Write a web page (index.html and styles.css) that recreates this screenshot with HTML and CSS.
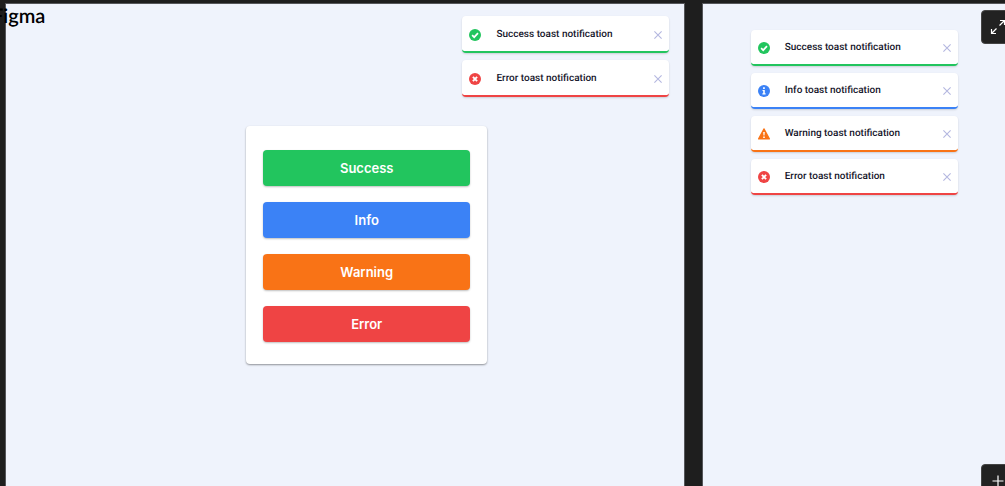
FILE: index.html
```html
<!DOCTYPE html>
<html lang="en">
<head>
<meta charset="utf-8">
<title>Toast notifications</title>
<link rel="stylesheet" href="styles.css">
</head>
<body>
<svg width="0" height="0" class="symbols" aria-hidden="true">
  <symbol id="check" viewBox="0 0 12 12"><circle cx="6" cy="6" r="6"/><path d="M3.100 6.200 5.200 8.200 9 4.200" fill="none" stroke="#fff" stroke-width="1.7"/></symbol>
  <symbol id="info" viewBox="0 0 12 12"><circle cx="6" cy="6" r="6"/><path d="M5.100 2.300h1.700v1.600H5.100zM4.500 4.900h2.300v3.300h.8v1.200H4.400V8.200h.8V6.100h-.7z" fill="#fff"/></symbol>
  <symbol id="warning" viewBox="0 0 12 12"><path d="M6 .9 11.400 10.900H.6z" stroke="currentColor" stroke-width="1.2" stroke-linejoin="round"/><path d="M5.200 4h1.600l-.3 3.600h-1zM5.200 8.400h1.600V10H5.200z" fill="#fff"/></symbol>
  <symbol id="error" viewBox="0 0 12 12"><circle cx="6" cy="6" r="6"/><path d="m3.900 3.900 4.200 4.200m0-4.200L3.900 8.100" fill="none" stroke="#fff" stroke-width="1.9"/></symbol>
  <symbol id="close" viewBox="0 0 8 8"><path d="m.4.4 7.200 7.200m0-7.200L.4 7.600" fill="none" stroke="currentColor" stroke-width="1.1"/></symbol>
</svg>
<div class="board">
  <main class="panel demo">
    <section class="toasts">
      <div class="toast success"><svg class="icon"><use href="#check"/></svg><span class="message">Success toast notification</span><button class="close" aria-label="Close"><svg><use href="#close"/></svg></button></div>
      <div class="toast error"><svg class="icon"><use href="#error"/></svg><span class="message">Error toast notification</span><button class="close" aria-label="Close"><svg><use href="#close"/></svg></button></div>
    </section>
    <section class="card">
      <button class="action success">Success</button>
      <button class="action info">Info</button>
      <button class="action warning">Warning</button>
      <button class="action error">Error</button>
    </section>
  </main>
  <aside class="panel gallery">
    <section class="toasts">
      <div class="toast success"><svg class="icon"><use href="#check"/></svg><span class="message">Success toast notification</span><button class="close" aria-label="Close"><svg><use href="#close"/></svg></button></div>
      <div class="toast info"><svg class="icon"><use href="#info"/></svg><span class="message">Info toast notification</span><button class="close" aria-label="Close"><svg><use href="#close"/></svg></button></div>
      <div class="toast warning"><svg class="icon"><use href="#warning"/></svg><span class="message">Warning toast notification</span><button class="close" aria-label="Close"><svg><use href="#close"/></svg></button></div>
      <div class="toast error"><svg class="icon"><use href="#error"/></svg><span class="message">Error toast notification</span><button class="close" aria-label="Close"><svg><use href="#close"/></svg></button></div>
    </section>
  </aside>
</div>
<div class="brand">Figma</div>
<button class="tool expand" aria-label="Full screen"><svg width="16" height="16" viewBox="0 0 16 16"><path d="M9.500 6.500 14.500 1.500M10 1.500h4.500V6M6.500 9.500 1.500 14.500M1.500 10v4.500H6"/></svg></button>
<button class="tool zoom" aria-label="Zoom in"><svg width="12" height="12" viewBox="0 0 12 12"><path d="M6 .5v11M.5 6h11"/></svg></button>
</body>
</html>
```
FILE: styles.css
```css
* {
  box-sizing: border-box;
}

body {
  margin: 0;
  position: relative;
  min-height: 100vh;
  overflow: hidden;
  background: #1e1e1e;
  color: #15152a;
  font-family: Inter, "Liberation Sans", sans-serif;
  text-rendering: geometricPrecision;
}

button {
  border: 0;
  padding: 0;
  font: inherit;
}

.symbols {
  position: absolute;
}

.board {
  display: grid;
  grid-template-columns: 9fr 4fr;
  gap: 19px;
  min-height: 100vh;
  padding: 4px 0 0 6px;
}

.panel {
  display: flex;
  flex-direction: column;
  background: #eff3fc;
  box-shadow: 0 0 0 1px #55565a;
}

.demo {
  padding: 12px 15px;
}

.demo .toasts {
  align-self: flex-end;
}

.gallery {
  align-items: center;
  padding-top: 26px;
}

.toasts {
  display: flex;
  flex-direction: column;
  gap: 7px;
  width: 207px;
}

.toast {
  display: flex;
  align-items: center;
  min-height: 37px;
  padding: 2px 7px 0;
  border-bottom: 2px solid currentColor;
  border-radius: 4px;
  background: #fff;
  box-shadow: 0 1px 2px rgba(0, 0, 0, 0.15);
}

.gallery .toast {
  min-height: 36px;
}

.toast.success {
  color: #22c55e;
}

.toast.info {
  color: #3b82f6;
}

.toast.warning {
  color: #f97316;
}

.toast.error {
  color: #ef4444;
}

.icon {
  width: 12px;
  height: 12px;
  margin-right: 15px;
  fill: currentColor;
}

.message {
  flex: 1;
  color: #15152a;
  font-family: Roboto, Inter, sans-serif;
  font-size: 10px;
  font-weight: 500;
  line-height: 16px;
}

.close {
  display: flex;
  background: none;
  color: #b4b7e0;
}

.close svg {
  width: 8px;
  height: 8px;
}

.card {
  display: flex;
  flex-direction: column;
  align-self: center;
  gap: 16px;
  width: 241px;
  margin: 29px 0 0 43px;
  padding: 24px 17px 22px;
  border-radius: 4px;
  background: #fff;
  box-shadow: 0 1px 2px rgba(0, 0, 0, 0.4);
}

.action {
  height: 36px;
  border-radius: 4px;
  color: #fff;
  font-size: 13px;
  font-weight: 600;
  box-shadow: 0 1px 2px rgba(0, 0, 0, 0.25);
}

.action.success {
  background: #22c55e;
}

.action.info {
  background: #3b82f6;
}

.action.warning {
  background: #f97316;
}

.action.error {
  background: #ef4444;
}

.brand {
  position: absolute;
  top: 4px;
  left: -8px;
  color: #000;
  font-family: Lato, sans-serif;
  font-size: 20px;
  font-weight: 600;
  line-height: 24px;
}

.tool {
  position: absolute;
  right: -10px;
  display: flex;
  align-items: center;
  justify-content: center;
  width: 34px;
  height: 34px;
  border: 1px solid #444;
  border-radius: 4px;
  background: #222;
}

.tool svg {
  fill: none;
  stroke: #fff;
  stroke-width: 1.2;
}

.expand {
  top: 10px;
}

.zoom {
  bottom: -12px;
}
```
